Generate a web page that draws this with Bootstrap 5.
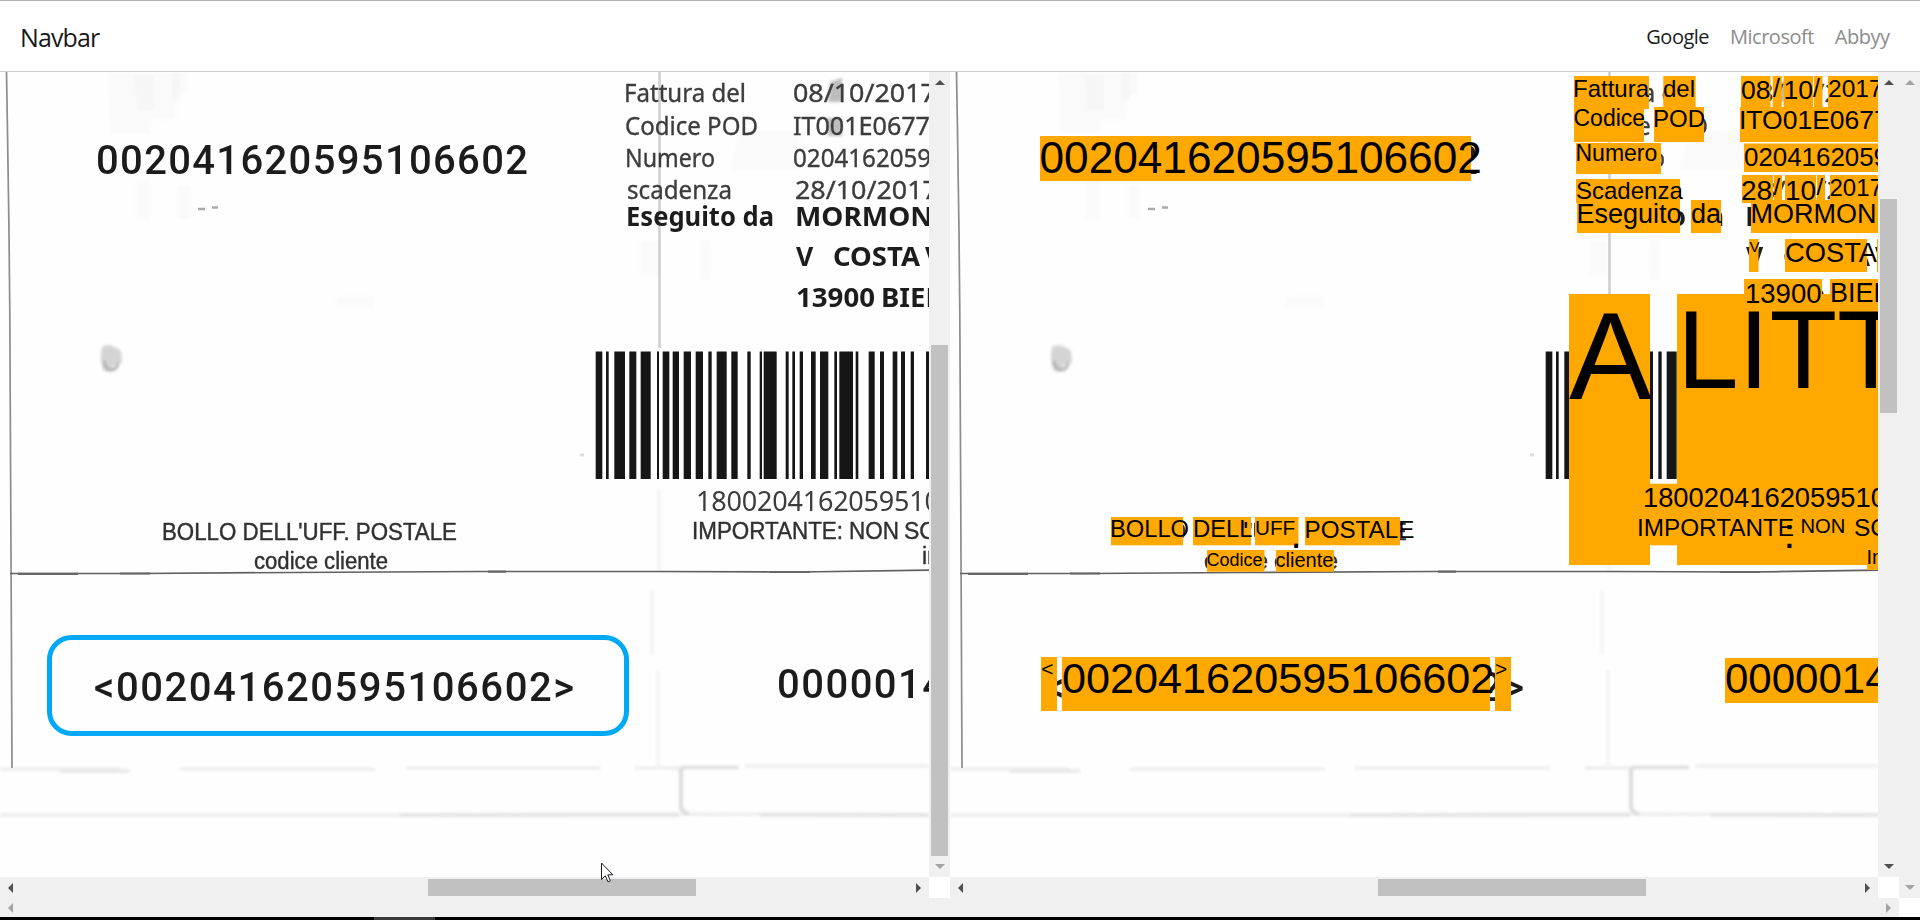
<!DOCTYPE html>
<html lang="en">
<head>
<meta charset="utf-8">
<meta name="viewport" content="width=device-width, initial-scale=1">
<title>Navbar</title>
<link href="https://cdn.jsdelivr.net/npm/bootstrap@5.3.0/dist/css/bootstrap.min.css" rel="stylesheet">
<style>
html,body{height:100%}
body{overflow:hidden;background:#fff;font-family:"Open Sans","Noto Sans",sans-serif}
.topbar{height:72px;border-top:1px solid #b0b0b0;border-bottom:1px solid #cfcfcf;padding:0 20px}
.topbar .navbar-brand{font-size:25px;letter-spacing:-.9px;color:#1a1a1a;padding:0;margin:3px 0 0}
.topbar .nav-link{font-size:20px;letter-spacing:-.5px;color:#8c8c8c;padding:2px 10.5px 0!important}
.topbar .nav-link.active{color:#1c1c1c}
.viewer{height:826px}
.pane{height:826px}
.pane-left{width:950px}
.pane-right{width:949px}
.sheet{height:805px;overflow:hidden;background:#fefefe}
.sheet svg{display:block}
.vbar{width:21px;background:#f0f0f0;padding:8px 2px}
.hbar{height:21px;background:#f0f0f0;padding:2px 8px}
.outer-h{height:19px}
.thumb{background:#c1c1c1}
.corner{width:21px;background:#fff}
.arr{width:0;height:0;border:5px solid transparent;flex:none}
.arr-u{border-top:0;border-bottom-color:#505050}
.arr-d{border-bottom:0;border-top-color:#505050}
.arr-l{border-left:0;border-right-color:#505050}
.arr-r{border-right:0;border-left-color:#505050}
.off.arr-u{border-bottom-color:#a3a3a3}
.off.arr-d{border-top-color:#a3a3a3}
.off.arr-l{border-right-color:#a3a3a3}
.off.arr-r{border-left-color:#a3a3a3}
.taskbar{height:3px;background:#000;padding-left:374px}
.taskbar div{width:61px;height:3px;background:#3a3a3a}
.pointer{left:601px;top:862px}
.big{font:500 40px Roboto,sans-serif;fill:#1c1c1c}
.reg{font:25px "Noto Sans",sans-serif;fill:#3c3c3c;stroke:#3c3c3c;stroke-width:.35}
.strong{font:700 26.500px "Noto Sans",sans-serif;fill:#1f1f1f}
.ari{font:23px "Liberation Sans",sans-serif;fill:#303030;stroke:#303030;stroke-width:.4}
.hit{font-family:"Liberation Sans",sans-serif;fill:#000}
.hitbox{fill:#ffa800}
</style>
</head>
<body class="d-flex flex-column">
<nav class="navbar topbar d-flex flex-nowrap justify-content-between align-items-center flex-shrink-0">
  <a class="navbar-brand" href="#">Navbar</a>
  <ul class="nav flex-nowrap">
    <li class="nav-item"><a class="nav-link active" href="#">Google</a></li>
    <li class="nav-item"><a class="nav-link" href="#">Microsoft</a></li>
    <li class="nav-item"><a class="nav-link" href="#">Abbyy</a></li>
  </ul>
</nav>
<main class="viewer d-flex flex-shrink-0">
  <section class="pane pane-left d-flex flex-column">
    <div class="d-flex">
      <div class="sheet flex-grow-1">
        <svg width="929" height="805" viewBox="0 72 929 805">
          <defs>
            <filter id="soft" x="-5%" y="-5%" width="110%" height="110%"><feGaussianBlur stdDeviation=".65"/></filter>
            <filter id="haze" x="-20%" y="-20%" width="140%" height="140%"><feGaussianBlur stdDeviation="1.5"/></filter>
          </defs>
          <g id="scan">
            <rect y="72" width="929" height="805" fill="#fefefe"/>
            <g filter="url(#haze)">
              <path d="M108 72h80v22h-12v26h-26v14h-40z" fill="#fafafa"/>
              <path d="M134 76h20v34h-16zM172 72h8v28h-8z" fill="#f6f6f6"/>
              <path d="M136 180h14v40h-14zM178 185h12v34h-12zM336 296h38v12h-38z" fill="#fafafa"/>
              <path d="M740 130h60v40h-70zM640 240h18v36h-18zM700 240h10v40h-10z" fill="#fafafa"/>
              <path d="M102 347q8-5 19 4l1 12-8 2-3 7-7-1q-5-10-2-24z" fill="#d4d4d4"/>
              <path d="M104 361q1 9 7 9t7-7" fill="none" stroke="#aaa" stroke-width="2.500"/>
              <path d="M0 769h120M180 769h195M405 768h195M635 768h45M745 766h184" fill="none" stroke="#ececec" stroke-width="3"/>
              <path d="M60 771h70" fill="none" stroke="#e4e4e4" stroke-width="3"/>
              <path d="M681 767.500h58" fill="none" stroke="#d8d8d8" stroke-width="3"/>
              <path d="M0 815h430l250-1M681 814l248 1" fill="none" stroke="#ededed" stroke-width="3.500"/>
              <path d="M400 815h280M760 815h169" fill="none" stroke="#e0e0e0" stroke-width="3"/>
              <path d="M681 768v40q3 5 8 6" fill="none" stroke="#dadada" stroke-width="4"/>
              <path d="M659 490v80M652 590v65M658 670v98" stroke="#f2f2f2" stroke-width="3"/>
              <path d="M830 82l12-4v24h-14zM826 118h16v18h-14z" fill="#bdbdbd"/>
            </g>
            <g filter="url(#soft)">
              <path d="M6.500 72l1 60 1.500 100 .8 80 1.200 240 1 216" fill="none" stroke="#8c8c8c" stroke-width="1.700"/>
              <path d="M659.500 72v276" stroke="#cfcfcf" stroke-width="2.600"/>
              <path d="M10 573.500h130l150-1 190-1h180l140 .5 129-1.800" fill="none" stroke="#606060" stroke-width="1.700"/>
              <path d="M18 573.800h60M120 573.500h30M488 571.700h18M770 572h40" stroke="#666" stroke-width="2.200"/>
              <path d="M198 209h7M212 207.500h6" stroke="#aaa" stroke-width="2.500"/>
              <path d="M448 162h6M580 455h4" stroke="#ddd" stroke-width="3"/>
              <g id="bars" fill="#161616"></g>
              <g class="big">
                <text x="96" y="174" textLength="432">002041620595106602</text>
                <text x="94" y="700.500" textLength="480">&lt;002041620595106602&gt;</text>
                <text x="777" y="697.500" textLength="168">0000014</text>
              </g>
              <g class="reg">
                <text x="624" y="102" textLength="122" lengthAdjust="spacingAndGlyphs">Fattura del</text>
                <text x="625" y="134.500" textLength="133" lengthAdjust="spacingAndGlyphs">Codice POD</text>
                <text x="625" y="167" textLength="90" lengthAdjust="spacingAndGlyphs">Numero</text>
                <text x="627" y="199" textLength="105" lengthAdjust="spacingAndGlyphs">scadenza</text>
                <text x="793" y="102" textLength="143" lengthAdjust="spacingAndGlyphs">08/10/2017</text>
                <text x="793" y="134.500" textLength="137" lengthAdjust="spacingAndGlyphs">IT001E0677</text>
                <text x="793" y="167" textLength="152" lengthAdjust="spacingAndGlyphs">02041620595</text>
                <text x="795" y="199" textLength="143" lengthAdjust="spacingAndGlyphs">28/10/2017</text>
                <text x="696" y="511" style="font-size:27px;stroke:none" textLength="244">1800204162059510</text>
              </g>
              <g class="strong">
                <text x="626" y="226" textLength="148" lengthAdjust="spacingAndGlyphs">Eseguito da</text>
                <text x="795" y="226" textLength="138" lengthAdjust="spacingAndGlyphs">MORMON</text>
                <text x="796" y="266">V</text>
                <text x="833" y="266" textLength="87" lengthAdjust="spacingAndGlyphs">COSTA</text>
                <text x="925" y="266">V</text>
                <text x="796" y="307" textLength="79" lengthAdjust="spacingAndGlyphs">13900</text>
                <text x="881" y="307" textLength="60" lengthAdjust="spacingAndGlyphs">BIEL</text>
              </g>
              <g class="ari">
                <text x="162" y="540" textLength="295" lengthAdjust="spacingAndGlyphs">BOLLO DELL'UFF. POSTALE</text>
                <text x="254" y="569" textLength="134" lengthAdjust="spacingAndGlyphs">codice cliente</text>
                <text x="692" y="539" textLength="151" lengthAdjust="spacingAndGlyphs">IMPORTANTE:</text>
                <text x="849" y="539" textLength="50" lengthAdjust="spacingAndGlyphs">NON</text>
                <text x="904" y="539">SC</text>
                <text x="922" y="564">in</text>
              </g>
            </g>
          </g>
          <rect x="49.500" y="637.500" width="577" height="96" rx="22" fill="none" stroke="#00a9f7" stroke-width="5"/>
        </svg>
      </div>
      <div class="vbar d-flex flex-column align-items-center">
        <i class="arr arr-u"></i>
        <div class="thumb" style="width:17px;height:511px;margin-top:260px"></div>
        <i class="arr arr-d off mt-auto"></i>
      </div>
    </div>
    <div class="d-flex">
      <div class="hbar d-flex align-items-center flex-grow-1">
        <i class="arr arr-l"></i>
        <div class="thumb" style="width:268px;height:17px;margin-left:415px"></div>
        <i class="arr arr-r ms-auto"></i>
      </div>
      <div class="corner"></div>
    </div>
  </section>
  <section class="pane pane-right d-flex flex-column">
    <div class="d-flex">
      <div class="sheet flex-grow-1">
        <svg width="928" height="805" viewBox="950 72 928 805">
          <use href="#scan" x="950"/>
          <g id="hits"></g>
        </svg>
      </div>
      <div class="vbar d-flex flex-column align-items-center">
        <i class="arr arr-u"></i>
        <div class="thumb" style="width:17px;height:214px;margin-top:114px"></div>
        <i class="arr arr-d mt-auto"></i>
      </div>
    </div>
    <div class="d-flex">
      <div class="hbar d-flex align-items-center flex-grow-1">
        <i class="arr arr-l"></i>
        <div class="thumb" style="width:268px;height:17px;margin-left:415px"></div>
        <i class="arr arr-r ms-auto"></i>
      </div>
      <div class="corner"></div>
    </div>
  </section>
  <div class="vbar d-flex flex-column align-items-center justify-content-between">
    <i class="arr arr-u off"></i><i class="arr arr-d off"></i>
  </div>
</main>
<div class="d-flex flex-shrink-0">
  <div class="hbar outer-h d-flex align-items-center justify-content-between flex-grow-1">
    <i class="arr arr-l off"></i><i class="arr arr-r off"></i>
  </div>
  <div class="corner"></div>
</div>
<footer class="taskbar flex-shrink-0"><div></div></footer>
<svg class="pointer position-absolute" width="13" height="21" viewBox="0 0 13 21"><path d="M.5 1v16.500l3.800-3.700 2.700 6 2.400-1-2.600-6h5z" fill="#fff" stroke="#1a1a2a" stroke-width="1"/></svg>
<script>
const NS = 'http://www.w3.org/2000/svg';
function add(parent, tag, attrs, text) {
  const el = document.createElementNS(NS, tag);
  for (const k in attrs) el.setAttribute(k, attrs[k]);
  if (text) el.textContent = text;
  parent.appendChild(el);
}
// barcode: start and end of each bar, in thirds of a pixel
const bars = [[107,127],[138,146],[163,195],[208,229],[242,272],[291,297],[308,328],[338,357],[371,393],[407,429],[445,455],[470,500],[514,533],[562,572],[599,606],[611,650],[677,686],[697,705],[719,729],[753,767],[780,805],[823,831],[838,879],[887,895],[926,944],[960,972],[998,1012],[1023,1035],[1052,1062],[1098,1112]];
for (const [a, b] of bars) add(document.getElementById('bars'), 'rect', {x: 560 + a / 3, y: 351.5, width: (b - a) / 3, height: 127.5});

// recognised words: box x, y, width, height, text, text x, baseline, font size
const hits = [
 [1569,294,81,271,'A',1569,399.3,124],
 [1677,294,210,271,'LITT',1677,387.7,110.8],
 [1040,136,431,45,'002041620595106602',1039.5,173,44.2],
 [1574,76,75,33,'Fattura',1573,97,24],
 [1663.3,76,32.3,31,'del',1663,97,24],
 [1574,107,70,35,'Codice',1573.5,126,23],
 [1654,107,50,35,'POD',1653,127,24],
 [1576,143,85,31,'Numero',1575.5,161,23],
 [1576,179,104,24,'Scadenza',1576,199,24],
 [1577,200,103,33,'Eseguito',1576.5,223,27],
 [1691,200,30,33,'da',1691,223,27],
 [1741,76,29.5,31,'08',1741,99,26.5],
 [1772.7,76,9,31,'/',1773,97,25],
 [1783.7,76,29.3,31,'10',1783.5,99,26.5],
 [1814,76,8.5,31,'/',1813,97,25],
 [1828,76,60,31,'2017',1828,97,24.5],
 [1740,107,150,35,'ITO01E0677',1739,129,26.5],
 [1744,143.5,150,28.5,'0204162059',1744,165.5,25.9],
 [1742,175,31,28,'28',1741,199.5,28],
 [1774,175,8,26,'/',1773.5,195,24],
 [1785,175,31,28,'10',1785,199.5,28],
 [1817,175,8,26,'/',1816.5,195,24],
 [1830,175,60,26,'2017',1829.5,196,24],
 [1751,200,150,33,'MORMON',1750.5,223,27],
 [1749,239,9.5,33,'V',1749.5,252,15],
 [1785,239,82,33,'COSTA',1785,262,27.3],
 [1877,239,5,33,'',0,0,0],
 [1744,279,78,26,'13900',1745,303.3,27.5],
 [1830,279,60,26,'BIEL',1830,302,27],
 [1642,483.7,245,33.5,'1800204162059510',1643,506.7,27.3],
 [1636,516,251,29.3,'IMPORTANTE',1637,535.6,24.3],
 [1784,516,0,0,':',1783.6,547.7,42],
 [1800,516,46,29.3,'NON',1800.5,532.7,20.2],
 [1854,516,40,29.3,'SC',1854,535.7,24.5],
 [1867,547,30,23,'In',1866.5,564,20],
 [1111,517,72,28.3,'BOLLO',1110,536.8,23.7],
 [1193,517,58,28.3,'DELL',1193,536.8,23.8],
 [1244,517,0,0,"'",1243,541,28],
 [1255,517,43.5,28.3,'UFF',1255,534.7,20.7],
 [1292,530,0,0,'.',1290.4,547.6,40],
 [1305,517,95,28.3,'POSTALE',1304.5,537.5,24.2],
 [1207,550,57.5,21.7,'Codice',1206.5,565.7,18],
 [1276,550,58,21.7,'cliente',1275.5,567,20],
 [1041,657,16,54,'<',1041.3,675.5,21],
 [1062,657,428,54,'002041620595106602',1062,692.7,43.2],
 [1495,657,16,54,'>',1495,675.5,21],
 [1725,658,160,45,'0000014',1725,693.4,42]
];
const layer = document.getElementById('hits');
for (const [x, y, w, h, t, tx, by, fs] of hits) {
  if (w) add(layer, 'rect', {class: 'hitbox', x: x, y: y, width: w, height: h});
  if (t) add(layer, 'text', {class: 'hit', x: tx, y: by, 'font-size': fs}, t);
}
</script>
<script src="https://cdn.jsdelivr.net/npm/bootstrap@5.3.0/dist/js/bootstrap.bundle.min.js"></script>
</body>
</html>
